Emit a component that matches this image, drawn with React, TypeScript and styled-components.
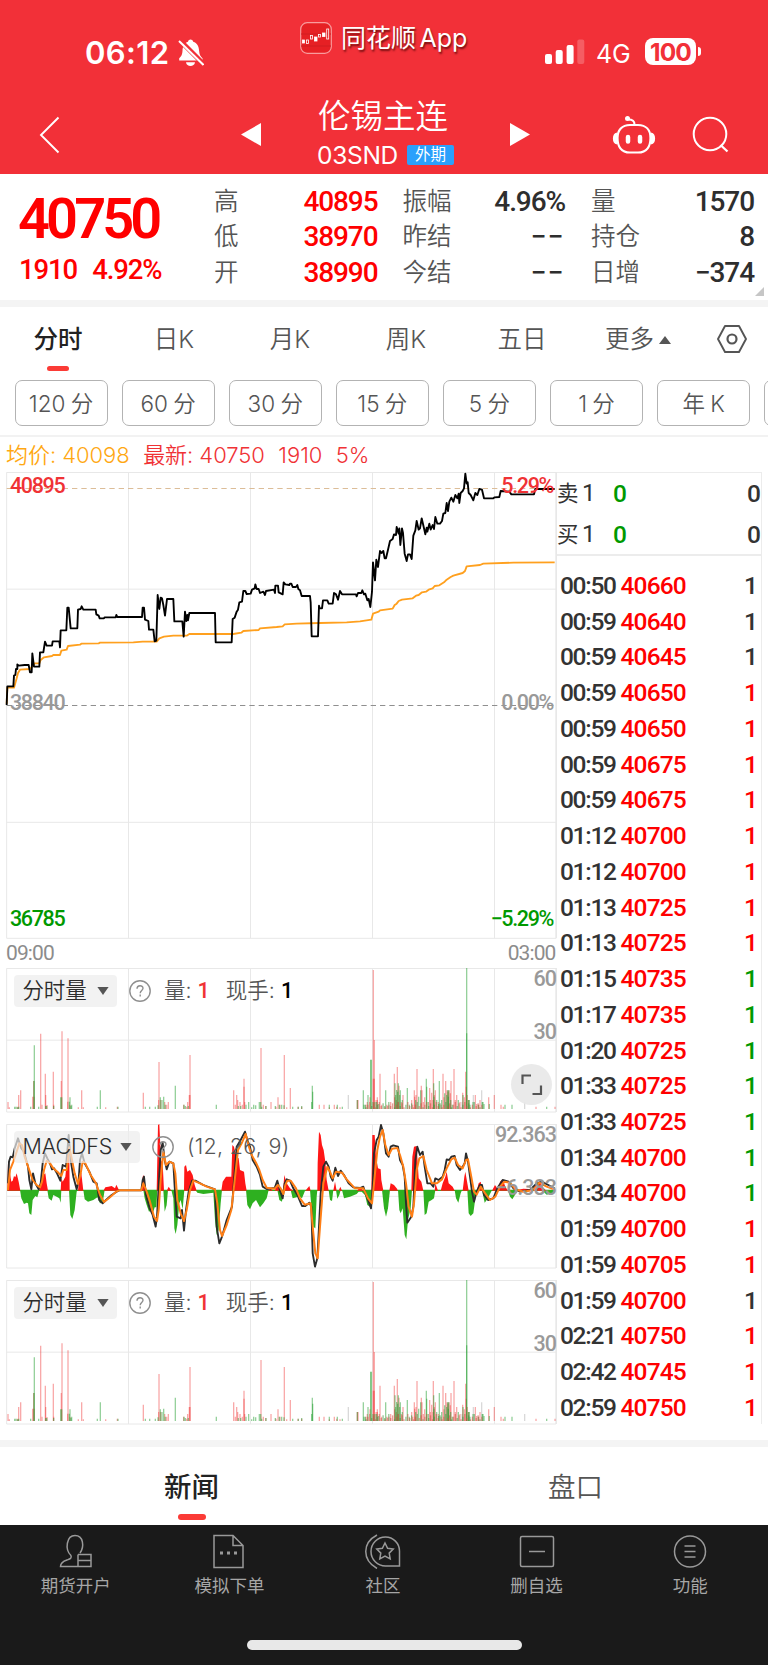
import React from "react";
import styled, { createGlobalStyle } from "styled-components";

const SANS = `Inter, "Noto Sans CJK SC", sans-serif`;
const DIGITS = `Roboto, "Noto Sans CJK SC", sans-serif`;

const GlobalStyle = createGlobalStyle`
  *, *::before, *::after { box-sizing: border-box; }
  body { margin: 0; background: #fff; font-family: ${SANS}; color: #333; }
  svg { display: block; }
`;

const Screen = styled.main`
  width: 768px;
  height: 1665px;
  display: flex;
  flex-direction: column;
  overflow: hidden;
  background: #fff;
  line-height: 1;
  white-space: nowrap;
`;

/* ---------- header ---------- */

const Header = styled.header`
  height: 174px;
  flex: none;
  background: #f23038;
  color: #fff;
`;

const StatusBar = styled.div`
  height: 92px;
  display: grid;
  grid-template-columns: 300px 244px 224px;
`;

const Clock = styled.div`
  display: flex;
  align-items: flex-start;
  padding: 37px 0 0 85px;
  font-size: 31px;
  font-weight: 600;
  letter-spacing: 0.4px;
  svg { margin: 2px 0 0 7px; }
`;

const AppBadge = styled.div`
  display: flex;
  align-items: center;
  align-self: start;
  height: 32px;
  margin-top: 22px;
  gap: 9px;
  font-size: 25px;
  word-spacing: -3.5px;
  text-shadow: 1px 2px 2px rgba(70, 0, 0, 0.75);
`;

const Signals = styled.div`
  display: flex;
  align-items: flex-start;
  padding: 38px 0 0 1px;
`;

const Network = styled.span`
  width: 48px;
  padding: 4px 0 0 11px;
  font-size: 25px;
  letter-spacing: -0.1px;
`;

const Battery = styled.span`
  width: 51px;
  height: 27px;
  margin-left: 12px;
  border-radius: 8px;
  background: #fff;
  color: #f23038;
  font-size: 24.5px;
  font-weight: 700;
  line-height: 28px;
  text-align: center;
  letter-spacing: -0.9px;
`;

const BatteryTip = styled.span`
  width: 3px;
  height: 9px;
  margin: 9px 0 0 1.5px;
  border-radius: 0 4px 4px 0;
  background: #fff;
`;

const TitleBar = styled.div`
  height: 82px;
  display: grid;
  grid-template-columns: 241px 20px 249px 20px 82px 42px 1fr;
`;

const IconSlot = styled.div<{ $top: number; $left?: number }>`
  padding: ${(p) => p.$top}px 0 0 ${(p) => p.$left ?? 0}px;
`;

const TitleBlock = styled.div`
  display: flex;
  flex-direction: column;
  align-items: center;
`;

const Title = styled.h1`
  margin: 8px 0 0 -5px;
  font-size: 32.5px;
  line-height: 34px;
  font-weight: 350;
`;

const Contract = styled.div`
  display: flex;
  align-items: center;
  margin: 9px 0 0;
  gap: 9px;
  font-size: 24.5px;
  letter-spacing: -0.3px;
`;

const MarketTag = styled.span`
  width: 47px;
  height: 20px;
  border-radius: 2px;
  background: #2aa0fc;
  font-size: 15.5px;
  line-height: 19px;
  letter-spacing: 0;
  text-align: center;
`;

/* ---------- quote ---------- */

const Quote = styled.section`
  position: relative;
  flex: none;
  height: 126px;
  display: grid;
  grid-template-columns: 214px 188.5px 188.5px 163px;
  font-family: ${DIGITS};
`;

const PriceBlock = styled.div`
  padding: 15px 0 0 18px;
  color: #ff0000;
  font-weight: 600;
`;

const LastPrice = styled.div`
  height: 56px;
  font-size: 56px;
  line-height: 60px;
  letter-spacing: -3.9px;
`;

const Change = styled.div`
  display: flex;
  gap: 15px;
  margin-top: 8px;
  padding-left: 1px;
  font-size: 27.5px;
  line-height: 34px;
  font-weight: 500;
  letter-spacing: -1.1px;
`;

const Stats = styled.dl<{ $pad: number }>`
  margin: 0;
  padding: 10px ${(p) => p.$pad}px 0 0;
`;

const Stat = styled.div`
  display: flex;
  justify-content: space-between;
  height: 35.4px;
  line-height: 36px;
`;

const StatLabel = styled.dt`
  font-size: 24.5px;
  font-weight: 350;
  color: #555;
`;

const StatValue = styled.dd<{ $up?: boolean; $blank?: boolean }>`
  margin: 0;
  font-size: 28px;
  font-weight: 500;
  letter-spacing: ${(p) => (p.$blank ? 1.4 : -1.1)}px;
  color: ${(p) => (p.$up ? "#ff0000" : "#2e2e2e")};
`;

const Corner = styled.i`
  position: absolute;
  right: 4px;
  bottom: 4px;
  border-left: 9px solid transparent;
  border-bottom: 9px solid #c6c6c6;
`;

const Band = styled.div`
  flex: none;
  height: 7px;
  background: #f4f4f4;
`;

/* ---------- period selection ---------- */

const PeriodTabs = styled.nav`
  flex: none;
  height: 73px;
  display: grid;
  grid-template-columns: repeat(6, 116px) 72px;
`;

const PeriodTab = styled.div<{ $active?: boolean }>`
  display: flex;
  flex-direction: column;
  align-items: center;
  padding-top: 15px;
  font-size: 24.5px;
  line-height: 35px;
  font-weight: ${(p) => (p.$active ? 500 : 350)};
  color: ${(p) => (p.$active ? "#222" : "#555")};
`;

const More = styled.span`
  display: flex;
  align-items: center;
  gap: 5px;
`;

const Marker = styled.i<{ $top: number; $width: number }>`
  width: ${(p) => p.$width}px;
  height: 5.5px;
  margin-top: ${(p) => p.$top}px;
  border-radius: 3px;
  background: #fb3b36;
`;

const MinuteRow = styled.div`
  flex: none;
  height: 57px;
  display: flex;
  gap: 14px;
  padding-left: 14.5px;
  overflow: hidden;
  border-bottom: 2px solid #f2f2f2;
`;

const MinuteButton = styled.button`
  flex: none;
  width: 93.1px;
  height: 46px;
  padding: 0 0 2px;
  border: 1px solid #b3b3b3;
  border-radius: 7px;
  background: #fff;
  font-family: ${SANS};
  font-size: 22.5px;
  font-weight: 350;
  word-spacing: -1px;
  color: #555;
`;

const Legend = styled.div`
  flex: none;
  height: 35px;
  display: flex;
  gap: 13.5px;
  padding-left: 6px;
  font-size: 22px;
  line-height: 36px;
  letter-spacing: -0.05px;
  color: #f03235;
  font-weight: 350;
`;

const Average = styled.span`
  color: #ffa812;
`;

/* ---------- market area ---------- */

const Market = styled.section`
  flex: none;
  height: 968px;
  display: grid;
  grid-template-columns: 557px 205px;
`;

const Charts = styled.div`
  display: flex;
  flex-direction: column;
`;

const Panel = styled.div<{ $height: number }>`
  position: relative;
  height: ${(p) => p.$height}px;
`;

const AxisLabel = styled.span<{ $top: number; $side: "left" | "right"; $color?: string }>`
  position: absolute;
  top: ${(p) => p.$top}px;
  ${(p) => (p.$side === "left" ? "left: 10px" : "right: 4px")};
  font-family: ${DIGITS};
  font-size: 21.5px;
  font-weight: 500;
  letter-spacing: -1.35px;
  color: ${(p) => p.$color ?? "#999"};
`;

const ScaleLabel = styled(AxisLabel)`
  right: 1px;
  letter-spacing: -1px;
`;

const TimeAxis = styled.div`
  height: 29px;
  display: flex;
  justify-content: space-between;
  padding: 0 1.5px 0 6px;
  font-family: ${DIGITS};
  font-size: 21px;
  line-height: 28px;
  letter-spacing: -0.9px;
  color: #8c8c8c;
`;

const IndicatorBar = styled.div`
  position: absolute;
  top: 7px;
  left: 13.5px;
  display: flex;
  align-items: center;
  height: 32px;
  font-size: 21.5px;
  font-weight: 350;
  color: #555;
`;

const IndicatorPicker = styled.div<{ $width: number }>`
  width: ${(p) => p.$width}px;
  height: 32px;
  display: flex;
  align-items: center;
  justify-content: space-between;
  padding: 0 8px 0 9px;
  border-radius: 4px;
  background: rgba(236, 236, 236, 0.7);
  letter-spacing: -0.15px;
  color: #2c2c2c;
`;

const Help = styled.svg`
  margin: 0 13px 0 12px;
`;

const Parameters = styled.span`
  letter-spacing: 0.3px;
`;

const Reading = styled.span<{ $color: string }>`
  margin: 0 16px 0 6px;
  font-family: ${DIGITS};
  font-weight: 500;
  color: ${(p) => p.$color};
`;

const ExpandButton = styled.div`
  position: absolute;
  left: 511px;
  top: 96px;
  width: 41px;
  height: 41px;
  border-radius: 50%;
  background: rgba(232, 232, 232, 0.9);
`;

/* ---------- order book and ticks ---------- */

const Tape = styled.aside`
  height: 952px;
  border: 1px solid #ececec;
  border-width: 1px 1px 0 0;
  font-family: ${DIGITS};
  font-size: 24.5px;
`;

const Book = styled.div`
  height: 83px;
  border-bottom: 2px solid #ececec;
`;

const BookRow = styled.div`
  height: 41px;
  display: grid;
  grid-template-columns: 56px 1fr auto;
  line-height: 41px;
`;

const BookSide = styled.span`
  font-size: 21.5px;
  font-weight: 400;
  span { margin-left: 3.5px; font-size: 24px; }
`;

const Deal = styled.b<{ $color?: string }>`
  font-weight: 500;
  color: ${(p) => p.$color ?? "#333"};
`;

const Ticks = styled.div`
  padding-top: 12px;
`;

const TickRow = styled.div`
  height: 35.74px;
  display: grid;
  grid-template-columns: 60.5px 1fr auto;
  padding: 0 4px 0 3px;
  line-height: 36px;
  letter-spacing: -0.85px;
`;

const TickTime = styled(Deal)`
  letter-spacing: -1.3px;
`;

const tone = { up: "#ff0000", down: "#009900", flat: "#333" };
type Tone = keyof typeof tone;

/* ---------- bottom ---------- */

const InfoTabs = styled.nav`
  flex: none;
  height: 78px;
  display: grid;
  grid-template-columns: 1fr 1fr;
`;

const InfoTab = styled.div<{ $active?: boolean }>`
  display: flex;
  flex-direction: column;
  align-items: center;
  padding: 22px 1px 0 0;
  font-size: 27.5px;
  line-height: 36px;
  font-weight: ${(p) => (p.$active ? 500 : 350)};
  color: ${(p) => (p.$active ? "#222" : "#555")};
`;

const Dock = styled.footer`
  flex: none;
  height: 140px;
  background: #1a1a1a;
`;

const DockItems = styled.div`
  height: 115px;
  display: grid;
  grid-template-columns: repeat(5, 1fr);
`;

const DockItem = styled.div`
  display: flex;
  flex-direction: column;
  align-items: center;
  padding: 9px 2px 0 0;
  font-size: 17.5px;
  line-height: 26px;
  color: #a6a6a6;
  svg { margin-bottom: 4px; }
`;

const HomeIndicator = styled.div`
  width: 275px;
  height: 10px;
  margin: 0 auto;
  border-radius: 5px;
  background: #e8e8e8;
`;

/* ---------- chart data, in thirds of a pixel ---------- */

const priceLine =
  "20,720 22,664 40,664 42,632 46,630 48,612 52,612 52,598 56,602 74,600 86,600 90,622 95,622 97,565 102,605 118,605 120,562 130,562 135,530 140,542 156,542 158,529 178,529 180,547 182,496 199,496 202,428 206,428 212,490 232,490 234,434 242,432 245,424 250,434 287,434 289,448 296,452 299,460 312,460 314,457 347,457 349,450 352,456 426,456 428,428 432,428 435,464 445,468 447,494 460,494 464,529 469,527 473,390 478,432 482,398 486,400 490,420 495,452 501,402 520,402 523,469 547,469 551,515 555,440 559,468 562,450 564,466 568,444 645,444 647,532 695,532 698,462 704,458 710,440 714,434 718,412 726,410 730,378 736,378 740,387 752,386 756,374 764,370 766,358 770,372 776,372 780,384 790,380 795,390 798,378 822,374 825,384 826,362 834,362 836,382 848,388 851,352 856,358 868,360 870,356 874,356 878,366 888,366 892,360 895,372 900,376 905,393 930,393 932,412 935,514 954,514 957,422 959,430 966,430 969,406 982,406 986,416 998,416 1002,384 1008,388 1014,404 1020,378 1026,388 1068,388 1070,394 1074,384 1084,384 1087,376 1092,388 1096,386 1102,406 1106,402 1111,426 1116,380 1119,292 1125,346 1129,284 1134,306 1140,258 1144,264 1150,258 1154,280 1158,280 1164,254 1170,228 1178,222 1182,208 1188,210 1190,186 1196,206 1198,190 1201,240 1206,190 1209,204 1214,266 1220,288 1224,268 1230,268 1235,282 1240,212 1246,196 1250,168 1256,194 1260,190 1265,160 1272,190 1276,208 1280,188 1282,200 1288,176 1292,194 1298,180 1302,192 1306,156 1312,176 1320,176 1326,168 1330,146 1336,144 1340,114 1344,138 1348,110 1354,98 1360,110 1366,90 1372,100 1376,86 1378,114 1382,84 1388,78 1392,70 1396,26 1400,56 1403,52 1406,84 1412,90 1420,106 1426,84 1432,90 1438,72 1446,74 1452,100 1480,100 1484,97 1498,96 1502,78 1528,80 1534,88 1602,88 1606,72 1664,72";

const averageLine =
  "20,716 22,668 42,668 50,640 54,624 60,614 90,612 104,595 118,595 122,585 132,577 156,573 160,570 180,570 184,557 200,554 204,543 240,539 244,536 296,535 300,533 400,532 428,530 470,530 478,520 492,515 520,512 560,512 568,507 700,507 724,503 730,498 776,495 780,490 830,486 848,484 854,478 890,476 960,474 1040,472 1080,469 1114,464 1119,446 1136,440 1140,436 1178,431 1184,420 1190,416 1196,408 1206,404 1238,400 1248,392 1256,390 1266,382 1278,380 1286,374 1298,370 1304,363 1318,361 1332,352 1340,344 1352,336 1360,332 1388,324 1395,318 1400,304 1440,300 1450,296 1540,293 1664,292";

/* pairs of x and bar top; the bars stand on 627 */
const redBars =
  "24,606 28,622 52,620 56,585 62,571 98,590 101,543 102,590 122,401 126,614 136,521 137,585 141,615 160,515 161,614 184,543 186,394 204,415 203,605 210,615 235,622 245,571 250,622 317,622 352,620 430,578 477,486 476,600 482,600 494,606 500,614 505,606 551,614 560,620 563,606 570,465 568,585 570,585 701,571 706,614 710,585 713,600 720,606 727,614 732,536 734,606 732,560 783,444 790,614 797,618 813,606 828,620 834,592 840,614 853,465 871,564 860,622 894,620 905,620 958,614 972,614 988,622 1003,614 1010,620 1020,622 1074,600 1072,600 1098,614 1102,606 1110,592 1120,210 1123,420 1120,536 1123,536 1128,600 1132,592 1132,600 1140,521 1145,614 1163,618 1167,614 1172,606 1183,521 1184,592 1189,600 1192,501 1197,557 1194,606 1204,606 1209,585 1235,600 1238,614 1243,571 1244,590 1251,507 1248,585 1264,557 1266,571 1270,606 1274,592 1289,564 1295,578 1300,507 1291,600 1299,600 1303,585 1306,571 1315,606 1323,614 1329,521 1332,592 1337,543 1341,571 1344,575 1347,571 1353,543 1351,580 1362,507 1366,600 1370,585 1380,606 1388,578 1393,592 1397,515 1399,560 1402,585 1406,600 1426,585 1430,612 1440,600 1436,614 1466,592 1483,585 1503,614 1510,620 1608,620 1665,620";
const greenBars =
  "44,620 48,620 56,620 53,622 92,620 103,436 102,543 116,620 137,618 140,618 161,618 182,592 185,592 208,605 210,592 213,618 215,614 292,620 301,571 354,620 436,620 449,620 466,620 474,616 481,592 486,600 491,590 496,614 526,557 552,614 556,618 565,618 649,614 715,618 722,618 738,614 746,606 755,622 761,614 767,616 778,606 782,606 785,620 798,618 826,618 838,614 845,614 852,616 878,620 895,620 905,618 937,557 935,606 938,575 988,614 1012,614 1027,620 1072,600 1090,571 1092,614 1096,614 1104,585 1112,479 1114,479 1119,606 1125,606 1130,606 1136,612 1157,571 1154,618 1185,550 1190,570 1195,550 1193,575 1187,585 1201,571 1199,585 1207,600 1222,564 1228,614 1247,600 1256,590 1262,571 1279,536 1285,606 1280,560 1301,550 1302,590 1318,543 1325,600 1340,585 1343,571 1346,571 1345,590 1352,600 1357,614 1375,600 1389,585 1400,204 1400,400 1405,600 1410,614 1419,606 1408,600 1435,614 1447,606 1452,612 1449,606 1468,612 1515,614 1536,614 1640,620 1310,600 1316,612 1334,580";
const grayBars = "1045,585 1420,585 1445,571 1574,606 1386,606";
const fillerBars = Array.from({ length: 62 }, (_, i) => [1098 + i * 5.7, 622 - ((i * 37) % 5) * 4]);

const redArea =
  "22,212 24,130 28,150 34,185 38,182 42,168 46,172 50,160 56,185 61,212|118,212 124,180 130,165 136,160 140,190 144,212|182,212 184,175 188,185 196,170 200,130 203,70 208,120 209,212|234,212 240,150 244,160 250,212|310,212 316,202 325,200 335,198 345,205 349,194 355,206 358,212|426,212 428,170 431,165 436,200 438,212|470,212 474,15 478,12 483,120 488,130 492,212|500,212 506,200 514,212|552,212 553,140 558,135 562,155 570,150 578,165 584,195 590,212|664,212 668,185 678,170 694,170 697,75 702,80 708,110 716,115 720,150 732,155 736,190 740,212|804,212 812,206 818,212|824,212 832,195 840,212|849,212 853,165 860,190 870,205 880,212|916,212 928,198 932,212|952,212 953,130 957,35 962,45 966,75 971,90 976,125 980,180 986,212|1000,212 1005,185 1010,212|1016,212 1021,200 1026,212|1070,212 1080,203 1092,212|1114,212 1117,45 1124,45 1128,110 1134,145 1142,148 1144,180 1150,212|1168,212 1172,190 1182,195 1190,205 1194,212|1234,212 1237,110 1242,80 1250,78 1256,175 1264,185 1270,212|1304,212 1306,190 1314,212|1322,212 1328,190 1336,170 1340,155 1346,190 1358,200 1364,212|1388,212 1393,170 1396,155 1402,190 1406,212|1430,212 1436,190 1442,185 1448,212|1476,212 1485,195 1495,210 1500,185 1508,178 1516,200 1524,212|1540,212 1570,206 1600,208 1610,190 1620,185 1630,205 1640,212";
const greenArea =
  "60,210 64,235 72,252 80,248 84,250 88,280 94,285 98,240 106,228 112,232 118,210|142,210 146,235 155,242 160,225 170,230 178,235 182,248 184,210|207,210 211,285 217,297 224,270 230,215 232,210|250,210 254,238 264,245 280,240 292,232 300,250 308,248 314,210|430,210 434,235 440,255 447,275 456,270 460,275 464,262 469,262 472,210|490,210 494,275 500,255 504,210|514,210 520,235 523,325 527,342 532,315 538,250 542,240 548,268 553,210|586,210 592,218 610,222 640,218 645,300 650,345 656,330 662,250 666,210|738,210 742,255 750,268 758,250 768,240 780,262 790,250 800,235 806,210|832,210 838,240 846,245 850,210|872,210 878,235 890,232 896,228 906,235 916,210|930,210 934,260 940,320 946,325 950,230 952,210|986,210 990,240 996,243 1000,210|1008,210 1012,236 1018,225 1022,210|1026,210 1032,235 1050,230 1070,222 1076,215 1085,215 1095,225 1102,255 1112,262 1116,210|1146,210 1152,265 1158,290 1164,265 1170,210|1194,210 1198,270 1202,280 1208,265 1214,345 1219,358 1224,300 1232,265 1236,210|1270,210 1274,285 1280,280 1286,245 1295,240 1302,235 1306,210|1364,210 1368,235 1375,248 1382,220 1386,210|1402,210 1406,280 1412,288 1420,280 1426,235 1430,210|1446,210 1454,248 1462,238 1476,210|1524,210 1530,230 1537,238 1548,220 1555,210|1625,210 1640,224 1660,218 1664,210";

const diffLine =
  "24,190 27,125 32,110 38,112 44,85 54,55 64,85 72,95 80,125 84,140 88,180 94,208 99,160 106,190 116,208 122,190 128,130 135,100 142,115 150,130 156,148 162,145 170,158 181,182 188,135 198,140 206,45 212,120 220,170 230,208 236,180 240,120 246,100 254,130 268,155 280,185 290,190 298,240 308,250 318,240 335,225 350,215 358,211 424,211 428,180 432,170 438,225 448,262 458,285 467,320 471,290 476,200 482,90 488,68 494,120 500,148 508,125 520,130 524,200 530,290 542,295 546,270 552,332 558,270 566,215 576,182 586,182 610,195 645,208 650,320 658,370 666,350 680,300 696,260 702,180 710,80 722,60 735,35 742,60 750,80 758,120 770,140 780,165 788,200 800,207 824,204 832,182 840,212 848,235 854,190 860,178 870,182 880,205 892,225 906,258 916,258 928,248 934,260 938,400 945,440 952,415 957,320 962,220 970,140 978,125 986,140 992,170 998,182 1006,143 1014,168 1022,152 1032,165 1046,190 1060,202 1080,204 1090,200 1098,225 1106,245 1113,265 1118,200 1122,100 1130,60 1136,50 1143,15 1150,40 1158,100 1166,110 1172,80 1180,76 1194,80 1200,120 1208,135 1214,170 1218,250 1222,308 1234,290 1240,260 1246,120 1252,80 1260,105 1268,95 1274,140 1282,190 1292,190 1300,200 1306,175 1316,180 1328,170 1334,150 1340,118 1348,120 1354,110 1364,108 1370,135 1380,150 1388,140 1394,130 1398,100 1404,125 1410,170 1416,215 1422,245 1430,215 1440,195 1446,195 1452,225 1464,240 1480,235 1492,205 1508,180 1526,185 1540,205 1560,215 1590,210 1610,190 1625,185 1645,195 1664,205";
const signalLine =
  "24,210 30,150 40,125 50,95 58,70 66,75 74,110 86,145 98,180 110,195 120,202 126,185 132,150 140,122 150,130 160,145 172,155 184,168 190,150 200,150 208,82 214,110 224,160 234,192 242,160 248,125 256,130 272,165 288,190 300,225 312,246 330,232 350,214 358,211 424,211 430,190 440,215 450,245 462,290 471,303 476,270 482,180 490,95 498,135 508,125 520,130 526,160 532,240 542,280 552,303 560,270 570,210 580,182 600,190 620,200 645,208 652,250 660,330 666,348 680,315 694,270 702,200 714,90 725,70 737,42 745,75 755,105 768,128 778,150 788,180 800,203 824,206 834,195 842,205 850,222 856,195 862,182 872,182 888,205 900,235 914,254 932,250 940,340 946,400 953,415 960,320 970,190 982,140 990,155 998,175 1008,155 1026,158 1040,178 1065,205 1090,205 1104,235 1116,250 1122,190 1132,90 1140,50 1148,30 1156,75 1166,105 1176,86 1192,84 1200,105 1210,140 1218,190 1226,260 1236,290 1242,250 1250,150 1258,115 1270,108 1280,150 1296,190 1310,190 1326,178 1340,145 1354,118 1364,113 1374,135 1388,145 1398,120 1404,118 1412,160 1422,215 1430,224 1442,200 1454,218 1470,240 1486,230 1500,200 1514,185 1530,188 1546,208 1570,215 1600,210 1618,188 1640,200 1662,208";

const columns = [20, 385.5, 751.5, 1117.5, 1483.5];

function Grid({ height, rows }: { height: number; rows: number[] }) {
  return (
    <g stroke="#e8e8e8" strokeWidth="3" fill="none">
      {columns.map((x) => (
        <path key={x} d={`M${x} 1V${height}`} />
      ))}
      {rows.map((y) => (
        <path key={y} d={`M20 ${y}H1668`} />
      ))}
      <path d={`M1668.5 0V${height}`} strokeWidth="5" />
    </g>
  );
}

function PriceChart() {
  return (
    <svg width="557" height="467" viewBox="0 0 1671 1401">
      <Grid height={1399} rows={[1.5, 351.5, 1051, 1399]} />
      <g transform="translate(0 -21)" fill="none">
        <path d="M20 70.5H1664" stroke="#dcbd98" strokeWidth="3.6" strokeDasharray="16 12" />
        <path d="M20 721.5H1664" stroke="#8f8f8f" strokeWidth="3.600" strokeDasharray="16 12" />
        <polyline points={averageLine} stroke="#ffa01e" strokeWidth="5.6" strokeLinejoin="round" />
        <polyline points={priceLine} stroke="#000" strokeWidth="5.6" strokeLinejoin="round" />
      </g>
    </svg>
  );
}

const bars = (list: string) =>
  list
    .split(" ")
    .map((pair) => pair.split(",").map(Number))
    .map(([x, top]) => `M${x} ${top}V627`)
    .join("");

function VolumeChart() {
  return (
    <svg width="557" height="145" viewBox="0 0 1671 435">
      <Grid height={432} rows={[1.5, 216.5, 432]} />
      <g transform="translate(0 -204)" strokeWidth="3.9" fill="none">
        <path d={bars(grayBars)} stroke="#d9d9d9" />
        {redBars.split(" ").map((bar, i) => (
          <path key={i} d={bars(bar)} stroke="#ee3030" strokeOpacity="0.42" />
        ))}
        {greenBars.split(" ").map((bar, i) => (
          <path key={i} d={bars(bar)} stroke="#1f9d2b" strokeOpacity="0.48" />
        ))}
        {fillerBars.map(([x, top], i) => (
          <path key={i} d={`M${x} ${top}V627`} stroke={i % 3 ? "#d05040" : "#3f9540"} strokeOpacity="0.55" />
        ))}
      </g>
    </svg>
  );
}

function MacdChart() {
  return (
    <svg width="557" height="145" viewBox="0 0 1671 435">
      <Grid height={432} rows={[1.5, 217, 432]} />
      <g transform="translate(0 -12)" fill="none" strokeLinejoin="round">
        <path d="M22 211H1664" stroke="#2eb020" strokeWidth="4" />
        {greenArea.split("|").map((p) => (
          <polygon key={p} points={p} fill="#2eb020" />
        ))}
        {redArea.split("|").map((p) => (
          <polygon key={p} points={p} fill="#ff1616" />
        ))}
        <polyline points={diffLine} stroke="#2c2c2c" strokeWidth="5.6" />
        <polyline points={signalLine} stroke="#ff7f16" strokeWidth="6" />
      </g>
    </svg>
  );
}

function Triangle({ up }: { up?: boolean }) {
  return (
    <svg width="12" height="8" viewBox="0 0 12 8">
      <path d={up ? "M6 0L12 8H0Z" : "M0.4 0H11.6L6 8Z"} fill="#555" />
    </svg>
  );
}

function HelpMark() {
  return (
    <Help width="22" height="22" viewBox="0 0 22 22" fill="none" stroke="#8f8f8f" strokeWidth="1.4">
      <circle cx="11" cy="11" r="10.2" />
      <path d="M8 8.8c0-4 6-4 6-.5 0 2.2-2.8 2.3-2.8 5M11.2 14.6v1.8" />
    </Help>
  );
}

function VolumePanel({ height, expandable }: { height: number; expandable?: boolean }) {
  return (
    <Panel $height={height}>
      <VolumeChart />
      <IndicatorBar>
        <IndicatorPicker $width={103.5}>
          分时量 <Triangle />
        </IndicatorPicker>
        <HelpMark />
        量:<Reading $color="#f03235">1</Reading>
        现手:<Reading $color="#000">1</Reading>
      </IndicatorBar>
      <ScaleLabel $side="right" $top={0}>60</ScaleLabel>
      <ScaleLabel $side="right" $top={53}>30</ScaleLabel>
      {expandable && (
        <ExpandButton>
          <svg width="41" height="41" viewBox="0 0 41 41" fill="none" stroke="#555" strokeWidth="2.2">
            <path d="M11.5 20V11.5H20M21.500 30H30V21.500" />
          </svg>
        </ExpandButton>
      )}
    </Panel>
  );
}

const stats: { pad: number; rows: [string, string, boolean?][] }[] = [
  { pad: 25, rows: [["高", "40895", true], ["低", "38970", true], ["开", "38990", true]] },
  { pad: 26, rows: [["振幅", "4.96%"], ["昨结", "−−"], ["今结", "−−"]] },
  { pad: 0, rows: [["量", "1570"], ["持仓", "8"], ["日增", "−374"]] },
];

const ticks: [string, string, Tone][] = [
  ["00:50", "40660", "flat"],
  ["00:59", "40640", "flat"],
  ["00:59", "40645", "flat"],
  ["00:59", "40650", "up"],
  ["00:59", "40650", "up"],
  ["00:59", "40675", "up"],
  ["00:59", "40675", "up"],
  ["01:12", "40700", "up"],
  ["01:12", "40700", "up"],
  ["01:13", "40725", "up"],
  ["01:13", "40725", "up"],
  ["01:15", "40735", "down"],
  ["01:17", "40735", "down"],
  ["01:20", "40725", "down"],
  ["01:33", "40725", "down"],
  ["01:33", "40725", "down"],
  ["01:34", "40700", "down"],
  ["01:34", "40700", "down"],
  ["01:59", "40700", "up"],
  ["01:59", "40705", "up"],
  ["01:59", "40700", "flat"],
  ["02:21", "40750", "up"],
  ["02:42", "40745", "up"],
  ["02:59", "40750", "up"],
];

const dockIcons: [string, React.ReactNode][] = [
  ["期货开户", <g key="a"><path d="M20 20.500h13v12H19M20 26.500h13M20 32.500V20.500M13 21.500c-6.500-6-4.500-20 4-20s9.500 11 5 17.500M13 21.500c1 3-1 3.500-4 4.500-4 1.300-6.500 3-6.500 6.500h17.500" /></g>],
  ["模拟下单", <g key="b"><path d="M3 1.500h19L32 11.500V33.500H3ZM22 1.500v10h10" /><path d="M9 19h3M16 19h3M23 19h3" strokeWidth="3" /></g>],
  ["社区", <g key="c"><path d="M20.500 3a14 14 0 1 0 0 29H34.500V17A14 14 0 0 0 20.500 3ZM12 1C-3 9-3 26 12 34.500" /><path d="M20 9l2.600 5.300 5.600.8-4 4 1 5.700-5.200-2.800-5.200 2.800 1-5.700-4-4 5.600-.8Z" /></g>],
  ["删自选", <g key="d"><rect x="1.500" y="2.500" width="33" height="30" rx="1.500" /><path d="M10 17.500h16" /></g>],
  ["功能", <g key="e"><circle cx="18" cy="17.500" r="15.500" /><path d="M12.500 12h11M12.500 17.500h11M12.500 23h11" /></g>],
];

export default function App() {
  return (
    <Screen>
      <GlobalStyle />
      <Header>
        <StatusBar>
          <Clock>
            06:12
            <svg width="27" height="28" viewBox="0 0 27 28" fill="#fff">
              <path d="M13.500 0.500c1.500 0 2.500 1 2.700 2.200 4 1.200 5.600 4.500 5.900 9 .3 4 1.200 5.500 3.400 7.600v2.200H2.200v-2.200C4.500 17.200 5.200 15.700 5.500 11.700c.3-4.500 2-7.800 5.500-9C11.200 1.500 12.200.5 13.500.5ZM9 23.300h9c-.5 5-8.500 5-9 0Z" />
              <path d="M2.500 1L26 24.500" stroke="#f23038" strokeWidth="5" />
              <path d="M2 2L26.500 26" stroke="#fff" strokeWidth="2" />
            </svg>
          </Clock>
          <AppBadge>
            <svg width="32" height="32" viewBox="0 0 32 32">
              <rect x="0.700" y="0.700" width="30.600" height="30.600" rx="6.500" fill="#e62024" stroke="#f99b9d" strokeWidth="1.200" />
              <path d="M1 12H31M1 24H31" stroke="#d01c20" strokeWidth="1" />
              <g fill="#fff" stroke="#fff" strokeWidth="0.800">
                <rect x="2.500" y="18" width="2" height="3" />
                <rect x="6.500" y="18" width="2" height="3.500" fill="none" />
                <rect x="10.500" y="13.500" width="2" height="3.500" fill="none" />
                <rect x="14.500" y="15" width="2.500" height="4" />
                <rect x="18.500" y="12.500" width="2" height="2.500" fill="none" />
                <rect x="22.500" y="11" width="2.500" height="3.500" />
                <rect x="26.700" y="7" width="2" height="10" fill="none" />
              </g>
            </svg>
            同花顺 App
          </AppBadge>
          <Signals>
            <svg width="40" height="28" viewBox="0 0 40 28" fill="#fff">
              <rect x="0" y="16" width="7" height="10" rx="2" />
              <rect x="10.700" y="12" width="7" height="14" rx="2" />
              <rect x="21.600" y="7" width="7" height="19" rx="2" />
              <rect x="32.300" y="1.500" width="7" height="24.500" rx="2" opacity="0.220" />
            </svg>
            <Network>4G</Network>
            <Battery>100</Battery>
            <BatteryTip />
          </Signals>
        </StatusBar>
        <TitleBar>
          <IconSlot $top={24} $left={39}>
            <svg width="21" height="38" viewBox="0 0 21 38" fill="none" stroke="#fff" strokeWidth="1.900">
              <path d="M19.500 1.500L2 19L19.500 36.500" />
            </svg>
          </IconSlot>
          <IconSlot $top={31}>
            <svg width="20" height="23" viewBox="0 0 20 23" fill="#fff"><path d="M0 11.500L20 0V23Z" /></svg>
          </IconSlot>
          <TitleBlock>
            <Title>伦锡主连</Title>
            <Contract>
              03SND <MarketTag>外期</MarketTag>
            </Contract>
          </TitleBlock>
          <IconSlot $top={31}>
            <svg width="20" height="23" viewBox="0 0 20 23" fill="#fff"><path d="M20 11.500L0 0V23Z" /></svg>
          </IconSlot>
          <IconSlot $top={23} $left={82}>
            <svg width="44" height="40" viewBox="0 0 44 40" fill="none" stroke="#fff" strokeWidth="2.200">
              <path d="M18 10h8c8 0 12.500 5 12.500 13s-3.500 14.500-12.500 14.500h-8C9 37.500 5.500 31 5.500 23S10 10 18 10Z" />
              <path d="M22.500 10c.5-4-2.500-5.500-6-5.500" />
              <circle cx="15.500" cy="3.500" r="2.500" fill="#fff" stroke="none" />
              <path d="M5 18.500c-4 1-4 9 0 10M39 18.500c4 1 4 9 0 10" fill="#fff" />
              <path d="M16 22v4.500M28 22v4.500" strokeWidth="4.500" strokeLinecap="round" />
            </svg>
          </IconSlot>
          <span />
          <IconSlot $top={24} $left={38}>
            <svg width="38" height="38" viewBox="0 0 38 38" fill="none" stroke="#fff" strokeWidth="2">
              <circle cx="18" cy="18" r="16.300" />
              <path d="M28.500 29L35.500 35.500" strokeWidth="2.300" />
            </svg>
          </IconSlot>
        </TitleBar>
      </Header>

      <Quote>
        <PriceBlock>
          <LastPrice>40750</LastPrice>
          <Change>
            <span>1910</span>
            <span>4.92%</span>
          </Change>
        </PriceBlock>
        {stats.map((group, i) => (
          <Stats key={i} $pad={group.pad}>
            {group.rows.map(([label, value, up]) => (
              <Stat key={label}>
                <StatLabel>{label}</StatLabel>
                <StatValue $up={up} $blank={value === "−−"}>{value}</StatValue>
              </Stat>
            ))}
          </Stats>
        ))}
        <Corner />
      </Quote>
      <Band />

      <PeriodTabs>
        <PeriodTab $active>
          分时
          <Marker $top={8.5} $width={21.5} />
        </PeriodTab>
        <PeriodTab>日K</PeriodTab>
        <PeriodTab>月K</PeriodTab>
        <PeriodTab>周K</PeriodTab>
        <PeriodTab>五日</PeriodTab>
        <PeriodTab>
          <More>更多 <Triangle up /></More>
        </PeriodTab>
        <PeriodTab>
          <svg width="30" height="34" viewBox="0 0 30 34" fill="none" stroke="#555" strokeWidth="1.900">
            <path d="M8 4H22L29 17L22 30H8L1 17Z" strokeLinejoin="round" />
            <circle cx="15" cy="17" r="4.500" strokeWidth="2.200" />
          </svg>
        </PeriodTab>
      </PeriodTabs>
      <MinuteRow>
        {["120 分", "60 分", "30 分", "15 分", "5 分", "1 分", "年 K", ""].map((label) => (
          <MinuteButton key={label}>{label}</MinuteButton>
        ))}
      </MinuteRow>
      <Legend>
        <Average>均价: 40098</Average>
        <span>最新: 40750</span>
        <span>1910</span>
        <span>5%</span>
      </Legend>

      <Market>
        <Charts>
          <Panel $height={467}>
            <PriceChart />
            <AxisLabel $side="left" $top={3} $color="#f03235">40895</AxisLabel>
            <AxisLabel $side="right" $top={3} $color="#f03235">5.29%</AxisLabel>
            <AxisLabel $side="left" $top={220}>38840</AxisLabel>
            <AxisLabel $side="right" $top={220}>0.00%</AxisLabel>
            <AxisLabel $side="left" $top={436} $color="#009900">36785</AxisLabel>
            <AxisLabel $side="right" $top={436} $color="#009900">−5.29%</AxisLabel>
          </Panel>
          <TimeAxis>
            <span>09:00</span>
            <span>03:00</span>
          </TimeAxis>
          <VolumePanel height={156} expandable />
          <Panel $height={156}>
            <MacdChart />
            <IndicatorBar>
              <IndicatorPicker $width={126.5}>
                MACDFS <Triangle />
              </IndicatorPicker>
              <HelpMark />
              <Parameters>(12, 26, 9)</Parameters>
            </IndicatorBar>
            <ScaleLabel $side="right" $top={0}>92.363</ScaleLabel>
            <ScaleLabel $side="right" $top={53}>−6.383</ScaleLabel>
          </Panel>
          <VolumePanel height={145} />
        </Charts>
        <Tape>
          <Book>
            <BookRow>
              <BookSide>卖<span>1</span></BookSide>
              <Deal $color={tone.down}>0</Deal>
              <Deal>0</Deal>
            </BookRow>
            <BookRow>
              <BookSide>买<span>1</span></BookSide>
              <Deal $color={tone.down}>0</Deal>
              <Deal>0</Deal>
            </BookRow>
          </Book>
          <Ticks>
            {ticks.map(([time, price, side], i) => (
              <TickRow key={i}>
                <TickTime>{time}</TickTime>
                <Deal $color={tone.up}>{price}</Deal>
                <Deal $color={tone[side]}>1</Deal>
              </TickRow>
            ))}
          </Ticks>
        </Tape>
      </Market>

      <Band />
      <InfoTabs>
        <InfoTab $active>
          新闻
          <Marker $top={9} $width={28} />
        </InfoTab>
        <InfoTab>盘口</InfoTab>
      </InfoTabs>
      <Dock>
        <DockItems>
          {dockIcons.map(([label, icon]) => (
            <DockItem key={label}>
              <svg width="36" height="35" viewBox="0 0 36 35" fill="none" stroke="#999" strokeWidth="1.500">
                {icon}
              </svg>
              {label}
            </DockItem>
          ))}
        </DockItems>
        <HomeIndicator />
      </Dock>
    </Screen>
  );
}
